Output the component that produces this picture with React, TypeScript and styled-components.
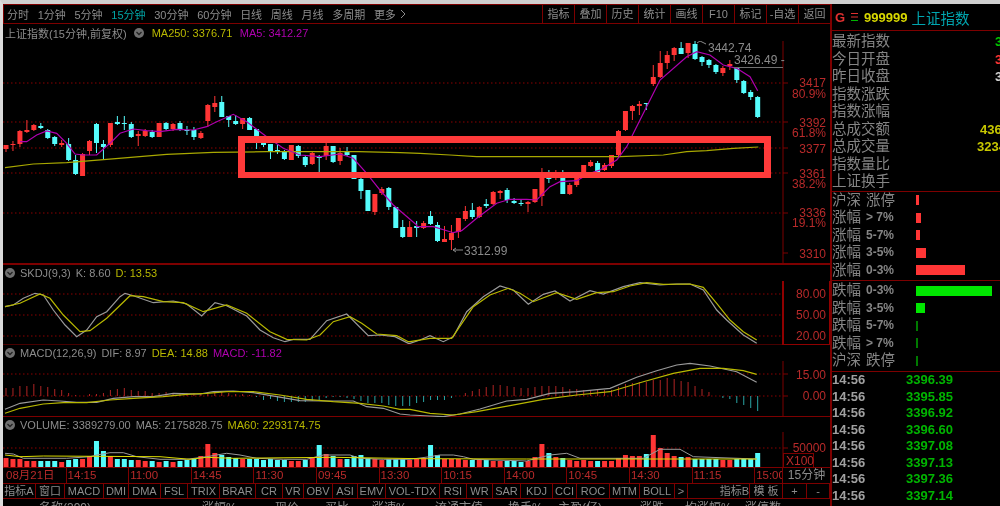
import styled, { createGlobalStyle } from "styled-components";

const GlobalStyle = createGlobalStyle`
  html, body {
    margin: 0;
    height: 100%;
    background: #000;
    overflow: hidden;
  }
  body {
    font-family: "Liberation Sans", "Noto Sans CJK SC", sans-serif;
    font-size: 11px;
    color: #8c8c8c;
  }
  * { box-sizing: border-box; }
`;

const RED_LINE = "#7d0000";
const TEXT_RED = "#b82a2a";
const CANDLE_RED = "#ff3535";
const CANDLE_CYAN = "#55fcfc";

const slot = (i: number) => 6 + i * 6.96;

// lines were read off 3x crops, so they are stored as they were read
const trace = (x0: number, y0: number, pts: number[]) => {
  const out: string[] = [];
  for (let i = 0; i < pts.length; i += 2) {
    out.push(`${(x0 + pts[i] / 3).toFixed(1)},${(y0 + pts[i + 1] / 3).toFixed(1)}`);
  }
  return out.join(" ");
};

type Candle = ["r" | "c", number, number, number, number];

const candles: Candle[] = [
  ["r", 145, 145, 149, 152], ["r", 141, 144, 145, 151], ["r", 130, 131, 144, 147], ["r", 120, 130, 132, 133],
  ["r", 124, 125, 130, 131], ["c", 123, 126, 128, 129], ["c", 129, 130, 138, 139], ["c", 136, 137, 144, 146],
  ["r", 140, 143, 145, 147], ["c", 138, 144, 160, 161], ["c", 155, 160, 174, 175], ["r", 153, 154, 176, 176],
  ["r", 140, 141, 151, 155], ["c", 123, 124, 143, 153], ["c", 140, 144, 147, 160], ["r", 123, 123, 145, 147],
  ["c", 116, 122, 124, 125], ["c", 116, 123, 124, 130], ["c", 122, 124, 137, 138], ["r", 131, 134, 136, 146],
  ["r", 129, 131, 136, 137], ["c", 130, 132, 137, 138], ["r", 123, 123, 137, 137], ["c", 122, 123, 129, 130],
  ["r", 123, 124, 129, 131], ["c", 121, 123, 129, 131], ["c", 126, 130, 131, 135], ["c", 127, 130, 137, 140],
  ["r", 131, 133, 138, 139], ["r", 104, 105, 121, 127], ["r", 96, 103, 107, 112], ["c", 96, 102, 117, 117],
  ["c", 116, 116, 120, 127], ["c", 115, 121, 124, 125], ["r", 118, 118, 124, 129], ["c", 117, 118, 130, 130],
  ["c", 129, 129, 136, 149], ["c", 141, 142, 145, 147], ["c", 144, 144, 151, 159], ["c", 145, 150, 152, 154],
  ["c", 150, 151, 159, 160], ["r", 145, 145, 160, 160], ["c", 145, 146, 156, 158], ["c", 155, 157, 165, 167],
  ["r", 152, 153, 164, 165], ["c", 155, 156, 158, 172], ["r", 141, 146, 156, 160], ["c", 146, 146, 162, 163],
  ["r", 148, 153, 161, 165], ["c", 147, 151, 155, 156], ["c", 155, 155, 179, 179], ["c", 176, 179, 191, 199],
  ["c", 190, 190, 211, 211], ["r", 194, 194, 212, 215], ["r", 187, 189, 193, 195], ["c", 187, 188, 207, 210],
  ["c", 207, 207, 228, 228], ["c", 220, 227, 237, 238], ["r", 221, 227, 237, 237], ["c", 221, 226, 228, 237],
  ["r", 221, 223, 228, 229], ["c", 211, 216, 224, 225], ["c", 222, 225, 241, 242], ["r", 226, 239, 242, 242],
  ["r", 225, 233, 240, 250], ["r", 218, 218, 232, 238], ["r", 206, 211, 219, 221], ["c", 203, 210, 217, 219],
  ["r", 206, 207, 217, 218], ["c", 199, 204, 206, 208], ["r", 191, 192, 204, 205], ["r", 190, 191, 193, 199],
  ["c", 188, 190, 200, 203], ["c", 198, 201, 203, 204], ["c", 200, 203, 204, 206], ["r", 201, 202, 204, 212],
  ["r", 189, 189, 202, 203], ["r", 168, 177, 196, 206], ["c", 170, 177, 179, 183], ["r", 170, 176, 178, 180],
  ["c", 170, 178, 194, 194], ["r", 183, 185, 194, 195], ["r", 175, 178, 185, 187], ["r", 165, 165, 173, 177],
  ["r", 160, 162, 166, 167], ["c", 161, 163, 172, 172], ["r", 163, 165, 170, 171], ["r", 155, 155, 166, 168],
  ["r", 130, 131, 155, 157], ["r", 111, 111, 130, 131], ["r", 105, 106, 111, 120], ["r", 101, 104, 106, 115],
  ["c", 103, 103, 104, 110], ["r", 65, 77, 84, 86], ["r", 51, 63, 77, 78], ["r", 51, 55, 63, 69],
  ["r", 47, 48, 55, 61], ["c", 42, 48, 54, 54], ["r", 43, 43, 53, 58], ["c", 41, 44, 59, 60],
  ["c", 56, 57, 62, 66], ["c", 59, 60, 65, 68], ["c", 64, 65, 72, 74], ["r", 66, 68, 73, 76],
  ["r", 60, 64, 66, 70], ["c", 67, 68, 80, 83], ["c", 80, 81, 93, 94], ["c", 90, 92, 97, 100],
  ["c", 96, 97, 117, 118],
];

const ma5 = [
  trace(0, 0, [60, 425, 80, 425, 110, 405, 140, 393, 170, 400, 200, 430, 225, 462, 250, 465, 290, 465, 330, 430, 360, 400, 400, 387, 440, 392, 480, 395, 530, 388, 580, 390, 620, 380, 650, 365, 700, 343, 740, 365, 800, 410, 850, 445, 900, 465, 960, 470, 1020, 462, 1060, 475]),
  trace(0, 160, [1100, 40, 1140, 90, 1180, 135, 1250, 195]),
  trace(410, 160, [20, 200, 70, 200, 130, 218, 155, 212, 200, 175, 260, 130, 300, 118, 350, 118, 380, 120, 420, 80, 450, 65, 500, 62, 540, 40, 570, 30]),
  trace(420, 0, [590, 480, 620, 440, 660, 360, 720, 240, 800, 170, 830, 155, 870, 165, 910, 195, 950, 205, 990, 230, 1013, 272]),
].join(" ");

const ma250 = [
  trace(0, 0, [15, 503, 100, 492, 200, 488, 320, 478, 500, 463, 640, 457, 800, 455, 1075, 455, 1200, 458, 1260, 460]),
  trace(420, 0, [90, 465, 170, 470, 600, 470, 730, 465, 800, 455, 860, 452, 940, 445, 1015, 441]),
].join(" ");

const kLine = [
  trace(0, 160, [15, 440, 40, 435, 70, 415, 105, 400, 130, 405, 160, 450, 195, 495, 230, 530, 260, 510, 290, 470, 320, 455, 360, 410, 375, 400, 400, 407, 460, 428, 520, 423, 560, 432, 605, 468, 645, 428, 680, 437, 740, 468, 780, 510, 820, 533, 855, 545, 880, 538, 930, 538, 980, 482, 1040, 462, 1105, 527, 1140, 525, 1185, 530, 1225, 550]),
  trace(410, 160, [0, 550, 30, 540, 60, 527, 100, 545, 130, 530, 170, 455, 220, 410, 270, 378, 310, 390, 355, 433, 400, 403, 435, 393, 480, 423, 540, 392, 580, 402, 640, 380, 690, 368, 750, 375, 800, 372, 840, 372, 880, 390, 920, 450, 950, 480, 1000, 525, 1040, 550]),
].join(" ");

const dLine = [
  trace(0, 160, [15, 440, 60, 430, 120, 402, 150, 415, 190, 465, 240, 515, 270, 512, 320, 475, 390, 407, 430, 410, 490, 425, 550, 428, 610, 455, 680, 435, 740, 460, 810, 515, 860, 538, 920, 540, 960, 525, 1000, 485, 1050, 470, 1085, 490, 1130, 522, 1190, 527, 1225, 545]),
  trace(410, 160, [0, 545, 60, 535, 125, 535, 190, 440, 240, 405, 295, 385, 330, 400, 370, 425, 440, 398, 500, 418, 560, 398, 610, 395, 660, 378, 710, 368, 760, 373, 840, 372, 880, 382, 920, 430, 960, 480, 1000, 515, 1040, 540]),
].join(" ");

const difLine = [
  trace(0, 340, [15, 208, 60, 190, 130, 180, 180, 183, 230, 187, 290, 187, 340, 175, 400, 170, 460, 170, 520, 160, 600, 162, 640, 155, 700, 153, 760, 158, 830, 170, 900, 182, 980, 183, 1060, 183, 1100, 200, 1150, 205, 1200, 222]),
  trace(410, 340, [0, 225, 60, 228, 100, 230, 150, 222, 210, 207, 290, 183, 350, 178, 420, 160, 500, 155, 600, 145, 680, 112, 740, 92, 800, 75, 840, 70, 900, 78, 980, 95, 1040, 127]),
].join(" ");

const deaLine = [
  trace(0, 340, [15, 220, 60, 205, 130, 192, 190, 188, 260, 188, 330, 180, 400, 175, 490, 170, 560, 163, 620, 160, 680, 155, 760, 155, 840, 165, 920, 178, 1000, 185, 1080, 190, 1150, 198, 1200, 208]),
  trace(410, 340, [0, 208, 60, 220, 130, 225, 200, 215, 300, 197, 400, 178, 500, 165, 600, 155, 700, 125, 790, 100, 870, 85, 940, 85, 1000, 92, 1040, 103]),
].join(" ");

const volMa5 = [
  trace(0, 340, [15, 340, 40, 342, 70, 355, 200, 355, 270, 350, 290, 345, 330, 338, 370, 338, 410, 350, 480, 358, 560, 358, 620, 350, 680, 340, 720, 345, 770, 355, 850, 358, 920, 358, 970, 345, 1050, 345, 1080, 355, 1150, 358]),
  trace(410, 340, [0, 358, 60, 350, 90, 345, 130, 345, 160, 350, 190, 358, 350, 363, 380, 355, 420, 345, 470, 340, 510, 355, 700, 355, 750, 328, 810, 328, 850, 350, 1040, 357]),
].join(" ");

const volMa60 = [
  trace(0, 340, [15, 345, 60, 350, 130, 348, 480, 350, 570, 358, 620, 352, 700, 355, 1000, 352, 1260, 356]),
  trace(410, 340, [350, 357, 1040, 357]),
].join(" ");

// px above / below the zero line, positive is red
const macdBars = [
  8, 8, 10, 10, 12, 10, 9, 7, 6, 3, 1, 0, 2, 2, 3, 6, 7, 8, 6, 5, 5, 3, 3, 4, 3, 3, 3, 3, 3, 2, 5, 4, 3, 2, 2, 1,
  -1, -4, -3, -5, -6, -6, -6, -6, -5, -4, -2, -1, -1, -2, -3, -5, -7, -7, -7, -9, -10, -10, -10, -7, -6, -4, -4, -4, -2, 0,
  3, 5, 7, 9, 11, 11, 10, 9, 8, 8, 9, 10, 10, 10, 9, 7, 7, 6, 6, 6, 6, 6, 9, 12, 13, 14, 14, 16, 16, 18, 17, 15, 14, 10, 7, 4, 0,
  -2, -3, -7, -9, -12, -15,
];

const volumes = [
  9, 8, 8, 6, 6, -6, -6, -6, 5, -7, -8, 8, 11, -26, -16, 11, -8, -8, -7, 7, 6, -6, 5, -6, 5, -6, -7, -8, 11, 23, 14, -12, -10, -9, 8, -8,
  -8, -7, -8, -7, -7, 6, 6, -7, 9, -22, 13, -11, 8, -8, -11, -12, -9, 8, 7, -8, -8, -8, 7, 8, 9, -22, -12, 8, 8, 8, 7, -7, 7, -7, 6, 6,
  -6, -6, -5, 6, 10, 23, -14, 10, -9, 7, 6, 7, 6, -6, 6, 6, 9, 12, 11, 11, -13, 32, 19, 14, 11, -10, 10, -8, -8, -8, -8, 7, 7, -8, -8, -8, -14,
];

const periods = ["分时", "1分钟", "5分钟", "15分钟", "30分钟", "60分钟", "日线", "周线", "月线", "多周期", "更多"];
const actions = ["指标", "叠加", "历史", "统计", "画线", "F10", "标记", "-自选", "返回"];
const times = ["08月21日", "14:15", "11:00", "14:45", "11:30", "09:45", "13:30", "10:15", "14:00", "10:45", "14:30", "11:15", "15:00"];

const indicatorTabs: [string, number][] = [
  ["指标A", 33], ["窗口", 29], ["MACD", 39], ["DMI", 25], ["DMA", 32], ["FSL", 27], ["TRIX", 32], ["BRAR", 36], ["CR", 27],
  ["VR", 21], ["OBV", 29], ["ASI", 25], ["EMV", 28], ["VOL-TDX", 54], ["RSI", 27], ["WR", 26], ["SAR", 28], ["KDJ", 32],
  ["CCI", 24], ["ROC", 33], ["MTM", 30], ["BOLL", 35], [">", 13],
];

const columns: [string, number][] = [
  ["名称(399)", 163], ["涨幅%", 73], ["现价", 50], ["买比", 47], ["涨速%", 63], ["流通市值", 73], ["换手%", 50], ["主盈(亿)", 82], ["涨跌", 45], ["均涨幅%", 60], ["涨停数", 40],
];

const stats: { label: string; value?: string; color?: string; left?: number }[] = [
  { label: "最新指数", value: "3396.39", color: "#00c800", left: 163 },
  { label: "今日开盘", value: "3400.50", color: "#ff3535", left: 163 },
  { label: "昨日收盘", value: "3408.13", color: "#d0d0d0", left: 163 },
  { label: "指数涨跌" },
  { label: "指数涨幅" },
  { label: "总成交额", value: "4361.2", color: "#c8c800", left: 148 },
  { label: "总成交量", value: "3234.5", color: "#c8c800", left: 145 },
  { label: "指数量比" },
  { label: "上证换手" },
];

const risers: [string, string, number][] = [
  ["沪深", "涨停", 3], ["涨幅", "> 7%", 5], ["涨幅", "5-7%", 4], ["涨幅", "3-5%", 10], ["涨幅", "0-3%", 49],
];
const fallers: [string, string, number][] = [
  ["跌幅", "0-3%", 76], ["跌幅", "3-5%", 9], ["跌幅", "5-7%", 1.5], ["跌幅", "> 7%", 1.5], ["沪深", "跌停", 1.5],
];

const ticks = ["3396.39", "3395.85", "3396.92", "3396.60", "3397.08", "3397.13", "3397.36", "3397.14"];

const Page = styled.div`
  width: 1000px;
  height: 506px;
  overflow: hidden;
  background: #000;
  border-top: 4px solid #cfcfcf;
  border-left: 3px solid #dcdcdc;
  display: flex;
  filter: blur(0.45px);
`;

const Main = styled.main`
  width: 827px;
  flex: none;
  display: flex;
  flex-direction: column;
`;

const Toolbar = styled.div`
  height: 20px;
  flex: none;
  border: 1px solid ${RED_LINE};
  border-right: 0;
  display: flex;
  align-items: center;
  padding-left: 3px;
`;

const Period = styled.span<{ $active?: boolean }>`
  margin-right: 8.7px;
  font-size: 11px;
  color: ${(p) => (p.$active ? "#00a6a6" : "#8c8c8c")};
`;

const Chevron = styled.svg`
  margin-left: -5px;
`;

const Actions = styled.div`
  margin-left: auto;
  display: flex;
  height: 100%;
`;

const Action = styled.span`
  width: 32px;
  border-left: 1px solid ${RED_LINE};
  text-align: center;
  font-size: 11px;
  line-height: 18px;
  white-space: nowrap;
`;

const Pane = styled.section<{ $height: number }>`
  height: ${(p) => p.$height}px;
  flex: none;
  overflow: hidden;
`;

const Legend = styled.div<{ $height: number; $gap: number }>`
  height: ${(p) => p.$height}px;
  display: flex;
  align-items: center;
  gap: ${(p) => p.$gap}px;
  padding-left: 2px;
  white-space: nowrap;
`;

const LegendItem = styled.span<{ $color?: string }>`
  color: ${(p) => p.$color ?? "#8c8c8c"};
`;

const Plot = styled.svg`
  display: block;
`;

const AxisRow = styled.div`
  height: 15px;
  flex: none;
  display: flex;
`;

const TimeTrack = styled.div`
  width: 780px;
  flex: none;
  display: flex;
  overflow: hidden;
  border-right: 1px solid ${RED_LINE};
`;

const TimeCell = styled.span<{ $first?: boolean }>`
  width: 62.6px;
  flex: none;
  padding-left: ${(p) => (p.$first ? 3 : 1)}px;
  border-left: ${(p) => (p.$first ? "0" : `1px solid ${RED_LINE}`)};
  color: ${TEXT_RED};
  font-size: 11.5px;
  line-height: 15px;
  white-space: nowrap;
`;

const Period15 = styled.span`
  flex: 1;
  text-align: center;
  font-size: 12px;
  line-height: 15px;
`;

const TabRow = styled.div`
  height: 16px;
  flex: none;
  display: flex;
  border-top: 1px solid ${RED_LINE};
  border-bottom: 1px solid ${RED_LINE};
`;

const Tab = styled.span<{ $w: number; $end?: boolean }>`
  width: ${(p) => p.$w}px;
  flex: none;
  border-right: 1px solid ${RED_LINE};
  text-align: ${(p) => (p.$end ? "right" : "center")};
  line-height: 14px;
  white-space: nowrap;
  overflow: hidden;
  font-size: 11px;
`;

const HeaderRow = styled.div`
  display: flex;
  padding-left: 36px;
  font-size: 12px;
  line-height: 17px;
  color: #8c8c8c;
  margin-top: 1px;
`;

const HeaderCell = styled.span<{ $w: number }>`
  width: ${(p) => p.$w}px;
  flex: none;
  white-space: nowrap;
`;

const Side = styled.aside`
  flex: 1;
  border-left: 2px solid ${RED_LINE};
  display: flex;
  flex-direction: column;
  min-width: 0;
  overflow: hidden;
`;

const SideHead = styled.div`
  height: 27px;
  flex: none;
  display: flex;
  align-items: center;
  gap: 6px;
  padding-left: 3px;
  border-bottom: 1px solid ${RED_LINE};
  white-space: nowrap;
`;

const Mark = styled.span`
  color: #e03030;
  font-size: 13px;
  font-weight: 700;
  width: 10px;
`;

const Code = styled.span`
  color: #d8d800;
  font-size: 13px;
  font-weight: 700;
`;

const Name = styled.span`
  color: #00a6b0;
  font-size: 14.5px;
  margin-left: -2px;
`;

const Group = styled.div<{ $top?: number; $bottom?: number }>`
  flex: none;
  padding-top: ${(p) => p.$top ?? 0}px;
  padding-bottom: ${(p) => p.$bottom ?? 1}px;
  border-bottom: 1px solid ${RED_LINE};
`;

const Row = styled.div`
  height: 17.5px;
  display: flex;
  align-items: center;
  white-space: nowrap;
`;

const Label = styled.span`
  font-size: 14.5px;
  line-height: 17.5px;
  color: #858585;
`;

const StatRow = styled(Row)`
  position: relative;
`;

const StatValue = styled.span<{ $left: number; $color: string }>`
  position: absolute;
  left: ${(p) => p.$left}px;
  color: ${(p) => p.$color};
  font-size: 13px;
  font-weight: 700;
`;

const RangeTag = styled.span<{ $wide?: boolean }>`
  width: 55px;
  flex: none;
  padding-left: 5px;
  font-size: ${(p) => (p.$wide ? 14.5 : 12)}px;
  font-weight: ${(p) => (p.$wide ? 400 : 700)};
  line-height: 17.5px;
  color: #858585;
`;

const RangeBar = styled.span<{ $w: number; $down?: boolean }>`
  width: ${(p) => p.$w}px;
  height: 10px;
  background: ${(p) => (p.$down ? (p.$w < 3 ? "#007a00" : "#00e600") : CANDLE_RED)};
  flex: none;
`;

const TickRow = styled.div`
  height: 16.5px;
  display: flex;
  align-items: center;
  font-size: 13px;
  font-weight: 700;
`;

const TickTime = styled.span`
  width: 74px;
  flex: none;
  color: #a0a0a0;
`;

const TickPrice = styled.span`
  color: #00b400;
`;

const Annotation = styled.div`
  position: absolute;
  left: 238px;
  top: 136px;
  width: 533px;
  height: 42px;
  border: 7px solid #ff3a3a;
  border-bottom-width: 6px;
  pointer-events: none;
`;

const Shell = styled.div`
  position: relative;
  width: 1000px;
  height: 506px;
`;

const Collapse = () => (
  <svg width="10" height="10" viewBox="0 0 10 10">
    <circle cx="5" cy="5" r="5" fill="#6f6f6f" />
    <path d="M2.5 4 L5 6.5 L7.5 4" fill="none" stroke="#222" strokeWidth="1.3" />
  </svg>
);

const Dots = ({ ys }: { ys: number[] }) => (
  <>
    {ys.map((y) => (
      <line key={y} x1="3" x2="783" y1={y} y2={y} stroke="#8a0000" strokeDasharray="1.5 2.5" />
    ))}
  </>
);

const AxisText = ({ y, children }: { y: number; children: string }) => (
  <text x="826" y={y} textAnchor="end" fill={TEXT_RED} fontSize="12" fontFamily="Liberation Sans">
    {children}
  </text>
);

const Grey = ({ x, y, children }: { x: number; y: number; children: string }) => (
  <text x={x} y={y} fill="#8a8a8a" fontSize="12" fontFamily="Liberation Sans">
    {children}
  </text>
);

const App = () => {
  return (
    <Shell>
      <GlobalStyle />
      <Page>
        <Main>
          <Toolbar>
            {periods.map((p) => (
              <Period key={p} $active={p === "15分钟"}>
                {p}
              </Period>
            ))}
            <Chevron width="6" height="10" viewBox="0 0 6 10">
              <path d="M1 1 L5 5 L1 9" fill="none" stroke="#8c8c8c" />
            </Chevron>
            <Actions>
              {actions.map((a) => (
                <Action key={a}>{a}</Action>
              ))}
            </Actions>
          </Toolbar>

          <Pane $height={241}>
            <Legend $height={17} $gap={7.5}>
              <LegendItem>上证指数(15分钟,前复权)</LegendItem>
              <Collapse />
              <LegendItem $color="#b8b800">MA250: 3376.71</LegendItem>
              <LegendItem $color="#b000b0">MA5: 3412.27</LegendItem>
            </Legend>
            <Plot width="827" height="224" viewBox="3 41 827 224">
              <Dots ys={[83, 122, 148, 173, 213]} />
              <line x1="783" x2="783" y1="24" y2="264" stroke={RED_LINE} />
              {[83, 122, 148, 173, 213, 253].map((y) => (
                <line key={y} x1="783" x2="788" y1={y} y2={y} stroke={RED_LINE} />
              ))}
              <line x1="3" x2="830" y1="264" y2="264" stroke={RED_LINE} strokeWidth="2" />
              {candles.map(([kind, hi, top, bottom, lo], i) => {
                const color = kind === "r" ? CANDLE_RED : CANDLE_CYAN;
                return (
                  <g key={i} fill={color}>
                    <rect x={slot(i) - 0.5} y={hi} width="1" height={lo - hi} />
                    <rect x={slot(i) - 2.5} y={top} width="5" height={Math.max(bottom - top, 1)} />
                  </g>
                );
              })}
              <polyline points={ma250} fill="none" stroke="#a8a800" strokeWidth="1.2" />
              <polyline points={ma5} fill="none" stroke="#b000b0" strokeWidth="1.2" />
              <path d="M697 43 L700 41 L706 44" fill="none" stroke="#8a8a8a" />
              <Grey x={708} y={52}>3442.74</Grey>
              <Grey x={734} y={64}>3426.49 -</Grey>
              <line x1="734" x2="783" y1="67.5" y2="67.5" stroke="#707070" />
              <path d="M463 250 H453 M456 248 L453 250 L456 252" fill="none" stroke="#8a8a8a" />
              <Grey x={464} y={255}>3312.99</Grey>
              <path d="M757 29 L761.5 33.5 L757 38 L752.5 33.5 Z" fill="none" stroke="#707070" />
              <rect x="769.5" y="29.5" width="10" height="8" rx="1" fill="none" stroke="#707070" />
              <rect x="775.5" y="31" width="3" height="5" fill="#707070" />
              <AxisText y={87}>3417</AxisText>
              <AxisText y={98}>80.9%</AxisText>
              <AxisText y={127}>3392</AxisText>
              <AxisText y={137}>61.8%</AxisText>
              <AxisText y={153}>3377</AxisText>
              <AxisText y={178}>3361</AxisText>
              <AxisText y={188}>38.2%</AxisText>
              <AxisText y={217}>3336</AxisText>
              <AxisText y={227}>19.1%</AxisText>
              <AxisText y={258}>3310</AxisText>
            </Plot>
          </Pane>

          <Pane $height={80}>
            <Legend $height={16} $gap={5}>
              <Collapse />
              <LegendItem>SKDJ(9,3)</LegendItem>
              <LegendItem>K: 8.60</LegendItem>
              <LegendItem $color="#b8b800">D: 13.53</LegendItem>
            </Legend>
            <Plot width="827" height="64" viewBox="3 281 827 64">
              <Dots ys={[294, 315, 336]} />
              <rect x="783" y="265" width="47" height="80" fill="none" stroke="#900000" strokeWidth="2" />
              <line x1="3" x2="830" y1="345" y2="345" stroke="#900000" />
              <polyline points={kLine} fill="none" stroke="#9a9a9a" strokeWidth="1.2" />
              <polyline points={dLine} fill="none" stroke="#b8b800" strokeWidth="1.2" />
              <AxisText y={298}>80.00</AxisText>
              <AxisText y={319}>50.00</AxisText>
              <AxisText y={340}>20.00</AxisText>
            </Plot>
          </Pane>

          <Pane $height={72}>
            <Legend $height={16} $gap={5}>
              <Collapse />
              <LegendItem>MACD(12,26,9)</LegendItem>
              <LegendItem>DIF: 8.97</LegendItem>
              <LegendItem $color="#b8b800">DEA: 14.88</LegendItem>
              <LegendItem $color="#b000b0">MACD: -11.82</LegendItem>
            </Legend>
            <Plot width="827" height="56" viewBox="3 361 827 56">
              <Dots ys={[374, 396]} />
              <line x1="783" x2="783" y1="345" y2="417" stroke={RED_LINE} />
              <line x1="783" x2="788" y1="374" y2="374" stroke={RED_LINE} />
              <line x1="783" x2="788" y1="396" y2="396" stroke={RED_LINE} />
              <line x1="3" x2="830" y1="416.5" y2="416.5" stroke={RED_LINE} />
              {macdBars.map((h, i) => (
                <line
                  key={i}
                  x1={slot(i)}
                  x2={slot(i)}
                  y1={396}
                  y2={396 - h}
                  stroke={h > 0 ? "#b02424" : "#2aa4a4"}
                />
              ))}
              <polyline points={difLine} fill="none" stroke="#9a9a9a" strokeWidth="1.2" />
              <polyline points={deaLine} fill="none" stroke="#b8b800" strokeWidth="1.2" />
              <AxisText y={379}>15.00</AxisText>
              <AxisText y={400}>0.00</AxisText>
            </Plot>
          </Pane>

          <Pane $height={51}>
            <Legend $height={15} $gap={5}>
              <Collapse />
              <LegendItem>VOLUME: 3389279.00</LegendItem>
              <LegendItem>MA5: 2175828.75</LegendItem>
              <LegendItem $color="#b8b800">MA60: 2293174.75</LegendItem>
            </Legend>
            <Plot width="827" height="36" viewBox="3 432 827 36">
              <Dots ys={[448]} />
              <line x1="783" x2="783" y1="417" y2="468" stroke={RED_LINE} />
              <line x1="783" x2="788" y1="448" y2="448" stroke={RED_LINE} />
              <line x1="3" x2="830" y1="467.5" y2="467.5" stroke={RED_LINE} />
              {volumes.map((v, i) => (
                <rect
                  key={i}
                  x={slot(i) - 2.5}
                  y={467 - Math.abs(v)}
                  width="5"
                  height={Math.abs(v)}
                  fill={v > 0 ? CANDLE_RED : CANDLE_CYAN}
                />
              ))}
              <polyline points={volMa5} fill="none" stroke="#9a9a9a" />
              <polyline points={volMa60} fill="none" stroke="#dcdc00" />
              <AxisText y={452}>50000</AxisText>
              <rect x="783.5" y="453.5" width="30" height="14" fill="none" stroke={RED_LINE} />
              <text x="786" y="465" fill={TEXT_RED} fontSize="12" fontFamily="Liberation Sans">
                X100
              </text>
            </Plot>
          </Pane>

          <AxisRow>
            <TimeTrack>
              {times.map((t, i) => (
                <TimeCell key={t} $first={i === 0}>
                  {t}
                </TimeCell>
              ))}
            </TimeTrack>
            <Period15>15分钟</Period15>
          </AxisRow>

          <TabRow>
            {indicatorTabs.map(([t, w]) => (
              <Tab key={t} $w={w}>
                {t}
              </Tab>
            ))}
            <Tab $w={62} $end>指标B</Tab>
            <Tab $w={33}>模 板</Tab>
            <Tab $w={24}>+</Tab>
            <Tab $w={23}>-</Tab>
          </TabRow>

          <HeaderRow>
            {columns.map(([t, w]) => (
              <HeaderCell key={t} $w={w}>
                {t}
              </HeaderCell>
            ))}
          </HeaderRow>
        </Main>

        <Side>
          <SideHead>
            <Mark>G</Mark>
            <svg width="7" height="10" viewBox="0 0 7 10">
              <rect y="1" width="7" height="1" fill="#e03030" />
              <rect y="4.5" width="7" height="1" fill="#e03030" />
              <rect y="8" width="7" height="1" fill="#00b400" />
            </svg>
            <Code>999999</Code>
            <Name>上证指数</Name>
          </SideHead>

          <Group $top={2} $bottom={0}>
            {stats.map((s) => (
              <StatRow key={s.label}>
                <Label>{s.label}</Label>
                {s.value && (
                  <StatValue $left={s.left ?? 0} $color={s.color ?? "#ccc"}>
                    {s.value}
                  </StatValue>
                )}
              </StatRow>
            ))}
          </Group>

          <Group>
            {risers.map(([a, b, w], i) => (
              <Row key={i}>
                <Label>{a}</Label>
                <RangeTag $wide={a === "沪深"}>{b}</RangeTag>
                <RangeBar $w={w} />
              </Row>
            ))}
          </Group>

          <Group $top={1}>
            {fallers.map(([a, b, w], i) => (
              <Row key={i}>
                <Label>{a}</Label>
                <RangeTag $wide={a === "沪深"}>{b}</RangeTag>
                <RangeBar $w={w} $down />
              </Row>
            ))}
          </Group>

          {ticks.map((t, i) => (
            <TickRow key={i}>
              <TickTime>14:56</TickTime>
              <TickPrice>{t}</TickPrice>
            </TickRow>
          ))}
        </Side>
      </Page>
      <Annotation />
    </Shell>
  );
};

export default App;
